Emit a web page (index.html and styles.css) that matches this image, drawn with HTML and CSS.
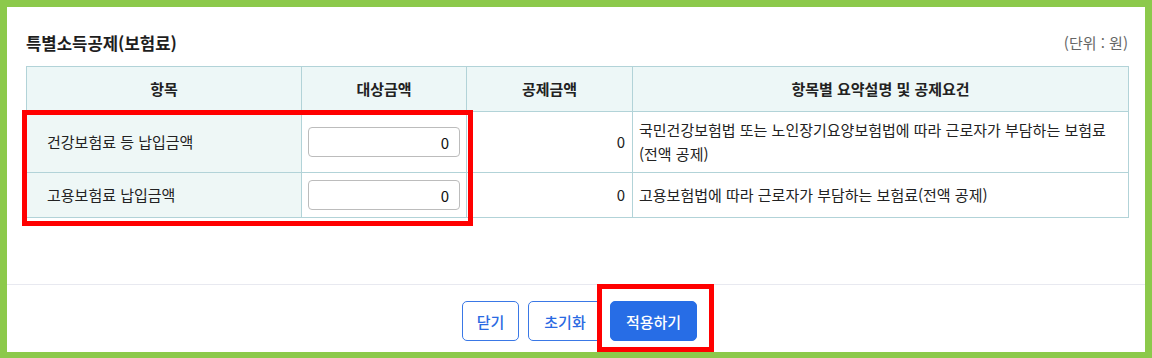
FILE: index.html
```html
<!DOCTYPE html>
<html lang="ko">
<head>
<meta charset="utf-8">
<title>특별소득공제(보험료)</title>
<link rel="stylesheet" href="styles.css">
</head>
<body>
<div class="frame">
  <div class="panel">
    <div class="content">
      <div class="title-row">
        <h2 class="title">특별소득공제(보험료)</h2>
        <span class="unit">(단위 : 원)</span>
      </div>
      <table class="grid">
        <colgroup>
          <col class="c1"><col class="c2"><col class="c3"><col class="c4">
        </colgroup>
        <thead>
          <tr>
            <th>항목</th>
            <th>대상금액</th>
            <th>공제금액</th>
            <th>항목별 요약설명 및 공제요건</th>
          </tr>
        </thead>
        <tbody>
          <tr class="tall">
            <td class="label">건강보험료 등 납입금액</td>
            <td class="inp"><input class="amount" type="text" value="0"></td>
            <td class="num">0</td>
            <td class="desc">국민건강보험법 또는 노인장기요양보험법에 따라 근로자가 부담하는 보험료 (전액 공제)</td>
          </tr>
          <tr class="short">
            <td class="label">고용보험료 납입금액</td>
            <td class="inp"><input class="amount" type="text" value="0"></td>
            <td class="num">0</td>
            <td class="desc">고용보험법에 따라 근로자가 부담하는 보험료(전액 공제)</td>
          </tr>
        </tbody>
      </table>
    </div>
    <div class="footer">
      <button class="btn outline btn-close">닫기</button>
      <button class="btn outline btn-reset">초기화</button>
      <button class="btn primary btn-apply">적용하기</button>
    </div>
  </div>
</div>
<div class="mark mark-table"></div>
<div class="mark mark-apply"></div>
</body>
</html>
```

FILE: styles.css
```css
* { box-sizing: border-box; }
html, body { margin: 0; padding: 0; }
body {
  position: relative;
  width: 1152px;
  height: 358px;
  overflow: hidden;
  font-family: "Noto Sans CJK KR", "Noto Sans", sans-serif;
  color: #222;
}
.frame {
  width: 1152px;
  height: 358px;
  background: #8cc94b;
  padding: 7px 7px 6px 7px;
}
.panel {
  background: #fff;
  height: 100%;
  display: flex;
  flex-direction: column;
}
.content {
  height: 278px;
  padding: 24px 17px 0 19px;
  border-bottom: 1px solid #e8e9f0;
}
.title-row {
  display: flex;
  justify-content: space-between;
  align-items: center;
  height: 24px;
  margin-bottom: 11px;
}
.title {
  margin: 0;
  font-size: 16.7px;
  font-weight: 700;
  line-height: 24px;
  color: #1e1e1e;
}
.unit {
  font-size: 15px;
  color: #666;
  line-height: 24px;
}
.grid {
  width: 1102px;
  border-collapse: collapse;
  table-layout: fixed;
  font-size: 15px;
}
.c1 { width: 275px; }
.c2 { width: 165px; }
.c3 { width: 166px; }
.c4 { width: 496px; }
.grid th, .grid td {
  border: 1px solid #b2d3d8;
  line-height: 24px;
  padding: 6px 6px;
  vertical-align: middle;
}
.grid th {
  background: #edf7f7;
  font-weight: 700;
  text-align: center;
  height: 45px;
  color: #222;
}
.grid td.label {
  background: #eef7f6;
  padding-left: 20px;
}
.grid td.inp { padding: 7px 6px 7px 6px; }
.grid td.num { text-align: right; padding-right: 7px; }
.grid td.desc { padding-left: 6px; }
.short td { height: 45px; }
.amount {
  display: block;
  width: 152px;
  height: 30px;
  border: 1px solid #bcbcbc;
  border-radius: 4px;
  padding: 0 10px;
  text-align: right;
  font-family: "Noto Sans CJK KR", "Noto Sans", sans-serif;
  font-size: 15px;
  color: #111;
  background: #fff;
}
.footer {
  display: flex;
  justify-content: center;
  gap: 8px;
  padding: 16px 0 0 7px;
}
.btn {
  height: 40px;
  padding: 0;
  border-radius: 5px;
  font-family: "Noto Sans CJK KR", "Noto Sans", sans-serif;
  font-size: 15px;
  font-weight: 500;
  cursor: pointer;
}
.btn-close { width: 57px; margin-right: 1px; }
.btn-reset { width: 74px; }
.btn-apply { width: 87px; }
.btn.outline {
  background: #fff;
  border: 1px solid #3a78e6;
  color: #2a6ae2;
}
.btn.primary {
  background: #276de6;
  border: 1px solid #276de6;
  color: #fff;
}
.mark {
  position: absolute;
  border: 5px solid #ff0000;
  pointer-events: none;
}
.mark-table { left: 22px; top: 110px; width: 451px; height: 116px; }
.mark-apply { left: 597px; top: 284px; width: 117px; height: 68px; }
```
